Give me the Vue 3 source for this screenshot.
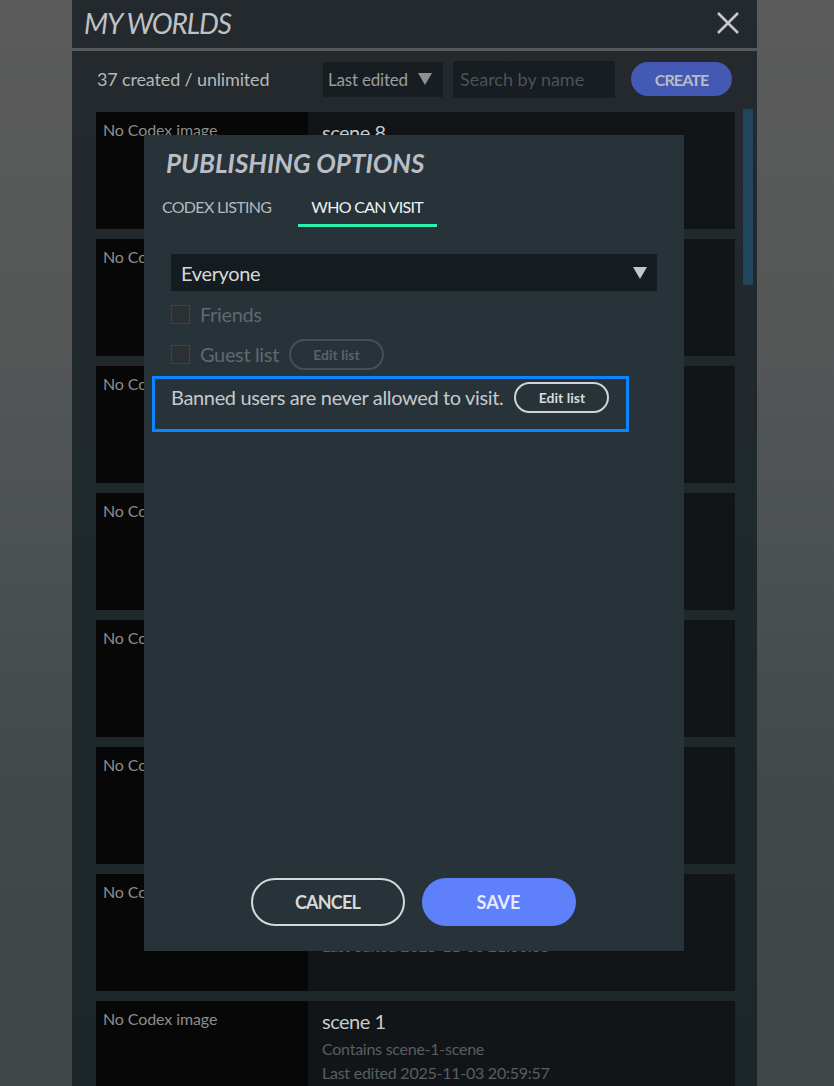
<template>
  <div class="page">
    <div class="panel">
      <header class="top">
        <h1>MY WORLDS</h1>
        <svg class="close" width="24" height="24" viewBox="0 0 24 24">
          <path d="M2 2 L22 22 M22 2 L2 22" stroke="#c4c7cb" stroke-width="2.6" fill="none" />
        </svg>
      </header>
      <div class="toolbar">
        <span class="count">37 created / unlimited</span>
        <div class="sort">
          <span>Last edited</span>
          <i class="arrow small"></i>
        </div>
        <div class="search">Search by name</div>
        <button class="create">CREATE</button>
      </div>
      <div class="list">
        <div v-for="w in worlds" :key="w.name" class="world">
          <div class="thumb">No Codex image</div>
          <div class="info">
            <div class="name">{{ w.name }}</div>
            <div class="meta">Contains {{ w.contains }}</div>
            <div class="meta">Last edited {{ w.edited }}</div>
          </div>
        </div>
      </div>
      <div class="scroll"></div>
    </div>

    <div class="modal">
      <h2>PUBLISHING OPTIONS</h2>
      <div class="tabs">
        <span class="tab">CODEX LISTING</span>
        <span class="tab active">WHO CAN VISIT</span>
      </div>
      <div class="body">
        <div class="select">
          <span>Everyone</span>
          <i class="arrow"></i>
        </div>
        <label class="check first"><i class="box"></i>Friends</label>
        <label class="check guest">
          <i class="box"></i>Guest list
          <button class="pill off">Edit list</button>
        </label>
        <div class="banned">
          <span>Banned users are never allowed to visit.</span>
          <button class="pill">Edit list</button>
        </div>
      </div>
      <div class="actions">
        <button class="cancel">CANCEL</button>
        <button class="save">SAVE</button>
      </div>
    </div>

    <div class="highlight"></div>
  </div>
</template>

<script setup>
const worlds = [
  { name: 'scene 8', contains: 'scene-8-scene', edited: '2025-11-03 21:30:12' },
  { name: 'scene 7', contains: 'scene-7-scene', edited: '2025-11-03 21:28:40' },
  { name: 'scene 6', contains: 'scene-6-scene', edited: '2025-11-03 21:25:02' },
  { name: 'scene 5', contains: 'scene-5-scene', edited: '2025-11-03 21:20:44' },
  { name: 'scene 4', contains: 'scene-4-scene', edited: '2025-11-03 21:15:31' },
  { name: 'scene 3', contains: 'scene-3-scene', edited: '2025-11-03 21:10:18' },
  { name: 'scene 2', contains: 'scene-2-scene', edited: '2025-11-03 21:00:05' },
  { name: 'scene 1', contains: 'scene-1-scene', edited: '2025-11-03 20:59:57' }
]
</script>

<style>
html, body {
  margin: 0;
  background: #3e4648;
}
</style>

<style scoped>
.page {
  position: relative;
  width: 834px;
  height: 1086px;
  overflow: hidden;
  font-family: Lato, "Open Sans", sans-serif;
  background: linear-gradient(180deg, #5b5b5b 0%, #555757 30%, #4c5153 50%, #414849 75%, #3e4648 100%);
}

.panel {
  position: relative;
  width: 685px;
  height: 1086px;
  margin-left: 72px;
  background: linear-gradient(180deg, #24292d 0%, #1f282b 50%, #1d2628 100%);
  overflow: hidden;
}

.top {
  display: flex;
  justify-content: space-between;
  align-items: center;
  height: 51px;
  box-sizing: border-box;
  padding: 0 17px 2px 12px;
  border-bottom: 3px solid #575a5c;
}

h1 {
  margin: 0;
  font-size: 28px;
  font-weight: 400;
  font-style: italic;
  letter-spacing: -1.1px;
  color: #bfc2c5;
}

.toolbar {
  display: flex;
  align-items: center;
  height: 56px;
  padding-left: 25px;
  font-size: 18px;
  color: #b5b8ba;
}

.count {
  width: 226px;
  letter-spacing: -0.15px;
}

.sort {
  display: flex;
  align-items: center;
  justify-content: space-between;
  width: 120px;
  height: 35px;
  box-sizing: border-box;
  padding: 0 11px 0 5px;
  background: #171d20;
  color: #9a9da0;
  font-size: 17px;
  letter-spacing: -0.2px;
}

.search {
  width: 162px;
  height: 37px;
  line-height: 37px;
  margin-left: 10px;
  box-sizing: border-box;
  padding-left: 7px;
  background: #171d20;
  color: #4d5358;
}

.create {
  width: 101px;
  height: 34px;
  margin-left: 16px;
  padding: 0;
  border: none;
  border-radius: 17px;
  background: #4459b3;
  color: #b8bcc4;
  font: 700 16px Lato, sans-serif;
  letter-spacing: -0.9px;
}

.arrow {
  width: 0;
  height: 0;
  border-left: 7px solid transparent;
  border-right: 7px solid transparent;
  border-top: 12px solid #c4c7cc;
}

.arrow.small {
  border-top-color: #8e9194;
}

.list {
  display: flex;
  flex-direction: column;
  gap: 10px;
  width: 639px;
  margin: 5px 0 0 24px;
}

.world {
  display: flex;
  height: 117px;
  flex: none;
  background: #111518;
}

.thumb {
  width: 212px;
  box-sizing: border-box;
  padding: 8px 7px;
  background: #070707;
  color: #8b8d8d;
  font-size: 16px;
  letter-spacing: -0.1px;
}

.info {
  padding: 8px 14px;
}

.name {
  font-size: 20px;
  letter-spacing: -0.5px;
  color: #c9cccd;
  margin-bottom: 4px;
}

.meta {
  font-size: 16px;
  line-height: 24px;
  letter-spacing: -0.25px;
  color: #5a5e61;
}

.scroll {
  position: absolute;
  left: 671px;
  top: 109px;
  width: 10px;
  height: 176px;
  background: #1f465c;
}

.modal {
  position: absolute;
  left: 144px;
  top: 135px;
  width: 540px;
  height: 816px;
  display: flex;
  flex-direction: column;
  background: #273239;
}

h2 {
  margin: 0;
  padding: 12px 0 0 22px;
  font-size: 26px;
  font-style: italic;
  font-weight: 700;
  color: #b9bdc4;
}

.tabs {
  display: flex;
  gap: 27px;
  margin-top: 13px;
  padding-left: 18px;
}

.tab {
  padding: 5px 0 8px;
  font-size: 16px;
  letter-spacing: -0.7px;
  color: #b5b9bd;
  border-bottom: 3px solid transparent;
}

.tab.active {
  padding: 5px 14px 8px 13px;
  color: #f0f2f4;
  border-bottom-color: #2ff0a8;
}

.body {
  flex: 1;
  padding: 27px 27px 0;
}

.select {
  display: flex;
  align-items: center;
  justify-content: space-between;
  height: 37px;
  padding: 0 10px;
  background: #151c1f;
  color: #d5d8db;
  font-size: 20px;
  letter-spacing: -0.35px;
}

.check {
  display: flex;
  align-items: center;
  height: 40px;
  color: #5f696e;
  font-size: 20px;
  letter-spacing: -0.35px;
}

.check.first {
  margin-top: 3px;
}

.box {
  width: 17px;
  height: 17px;
  margin-right: 10px;
  background: #2c3033;
  border: 1px solid #3b4448;
}

.pill {
  width: 95px;
  height: 31px;
  padding: 0;
  border: 2px solid #d2d4d4;
  border-radius: 16px;
  background: transparent;
  color: #d8dadb;
  font: 700 14px Lato, sans-serif;
}

.pill.off {
  margin-left: 10px;
  border-color: #455056;
  color: #586268;
}

.banned {
  display: flex;
  align-items: center;
  gap: 11px;
  height: 40px;
  margin-top: 3px;
  color: #c5c9cc;
  font-size: 20px;
  letter-spacing: -0.35px;
}

.actions {
  display: flex;
  justify-content: center;
  gap: 17px;
  padding: 0 2px 25px 0;
}

.actions button {
  width: 154px;
  height: 48px;
  padding: 0;
  border-radius: 24px;
  font: 700 18px Lato, sans-serif;
}

.cancel {
  background: transparent;
  border: 2px solid #d6d8d8;
  color: #d6d8d8;
  letter-spacing: -0.8px;
}

.save {
  background: #5f80fb;
  border: none;
  color: #e6ebff;
}

.highlight {
  position: absolute;
  left: 152px;
  top: 376px;
  width: 477px;
  height: 56px;
  box-sizing: border-box;
  border: 3px solid #0a84ff;
}
</style>
